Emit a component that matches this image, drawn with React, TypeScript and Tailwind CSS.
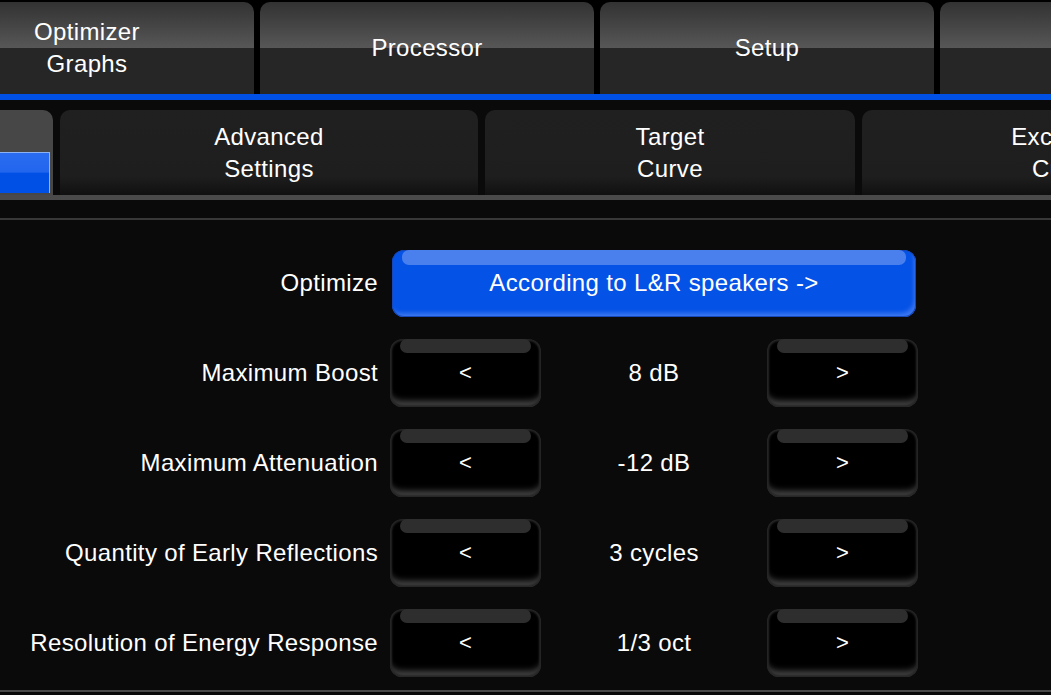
import React from 'react';

const topTabs = [
  { label: ['Optimizer', 'Graphs'], width: 'w-[334px]' },
  { label: ['Processor'], width: 'w-[334px]' },
  { label: ['Setup'], width: 'w-[334px]' },
  { label: [], width: 'w-[334px]' },
];

const subTabs = [
  { label: ['Advanced', 'Settings'], width: 'w-[418px]' },
  { label: ['Target', 'Curve'], width: 'w-[370px]' },
  { label: ['Excitation', 'Curve'], width: 'w-[406px]' },
];

const rows = [
  { label: 'Maximum Boost', value: '8 dB' },
  { label: 'Maximum Attenuation', value: '-12 dB' },
  { label: 'Quantity of Early Reflections', value: '3 cycles' },
  { label: 'Resolution of Energy Response', value: '1/3 oct' },
];

function StepButton({ label }: { label: string }) {
  return (
    <div className="flex h-[68px] w-[151px] shrink-0 flex-col rounded-[12px] bg-black shadow-[inset_0_0_2px_2px_#262626,inset_0_-10px_6px_-4px_#464646]">
      <div className="mx-[10px] h-[14px] rounded-[7px] bg-[#2e2e2e]" />
      <div className="flex flex-1 items-center justify-center pb-[14px] text-[22px] leading-none text-white">
        {label}
      </div>
    </div>
  );
}

export default function App() {
  return (
    <div className="h-[695px] w-[1051px] overflow-hidden bg-[#0a0a0a] font-['Liberation_Sans',Arial,sans-serif] tracking-[0.35px] text-white">
      {/* main tabs */}
      <div className="flex gap-[6px] bg-black pt-[2px]">
        {topTabs.map((t, i) => (
          <div
            key={i}
            className={`${t.width} ${i === 0 ? '-ml-[80px]' : ''} flex h-[92px] shrink-0 flex-col items-center justify-center rounded-t-[10px] bg-[linear-gradient(to_bottom,#323232_0%,#575757_50%,#262626_50%,#262626_100%)] text-[24px] leading-[32px]`}
          >
            {t.label.map((l) => (
              <span key={l}>{l}</span>
            ))}
          </div>
        ))}
      </div>
      <div className="h-[6px] bg-[#0050e6]" />

      {/* sub tabs */}
      <div className="mt-[10px] flex gap-[7px]">
        <div className="flex h-[85px] w-[53px] shrink-0 flex-col justify-end rounded-tr-[10px] bg-[#474747] pb-[2px]">
          <div className="h-[41px] w-[50px] border-t border-r border-[#8db2f3] bg-[linear-gradient(to_bottom,#2a6cf0_0%,#2266ee_48%,#0050e6_50%,#0050e6_100%)]" />
        </div>
        {subTabs.map((t, i) => (
          <div
            key={i}
            className={`${t.width} flex h-[85px] shrink-0 flex-col items-center justify-center rounded-t-[10px] bg-[linear-gradient(to_bottom,#202020_0%,#1e1e1e_78%,#101010_100%)] text-[24px] leading-[32px]`}
          >
            {t.label.map((l) => (
              <span key={l}>{l}</span>
            ))}
          </div>
        ))}
      </div>
      <div className="h-[5px] bg-[#4a4a4a]" />
      <div className="mt-[18px] h-[2px] bg-[#383838]" />

      {/* settings */}
      <div className="flex flex-col pt-[18px]">
        <div className="flex h-[90px] items-center">
          <div className="w-[378px] shrink-0 text-right text-[24px]">Optimize</div>
          <div className="ml-[14px] flex h-[67px] w-[524px] flex-col rounded-[12px] bg-[#0552e6] shadow-[inset_0_0_0_1px_#1747b8,inset_-3px_-5px_4px_-1px_#3d78f0]">
            <div className="mx-[10px] h-[15px] rounded-[7px] bg-[#4a80ee]" />
            <div className="flex flex-1 items-center justify-center pb-[15px] text-[24px] leading-none">
              According to L&amp;R speakers -&gt;
            </div>
          </div>
        </div>
        {rows.map((r) => (
          <div key={r.label} className="flex h-[90px] items-center">
            <div className="w-[378px] shrink-0 text-right text-[24px]">{r.label}</div>
            <div className="ml-[12px] flex items-center">
              <StepButton label="<" />
              <div className="w-[226px] text-center text-[24px]">{r.value}</div>
              <StepButton label=">" />
            </div>
          </div>
        ))}
      </div>
      <div className="mt-[2px] h-[2px] bg-[#4a4a4a]" />
    </div>
  );
}
